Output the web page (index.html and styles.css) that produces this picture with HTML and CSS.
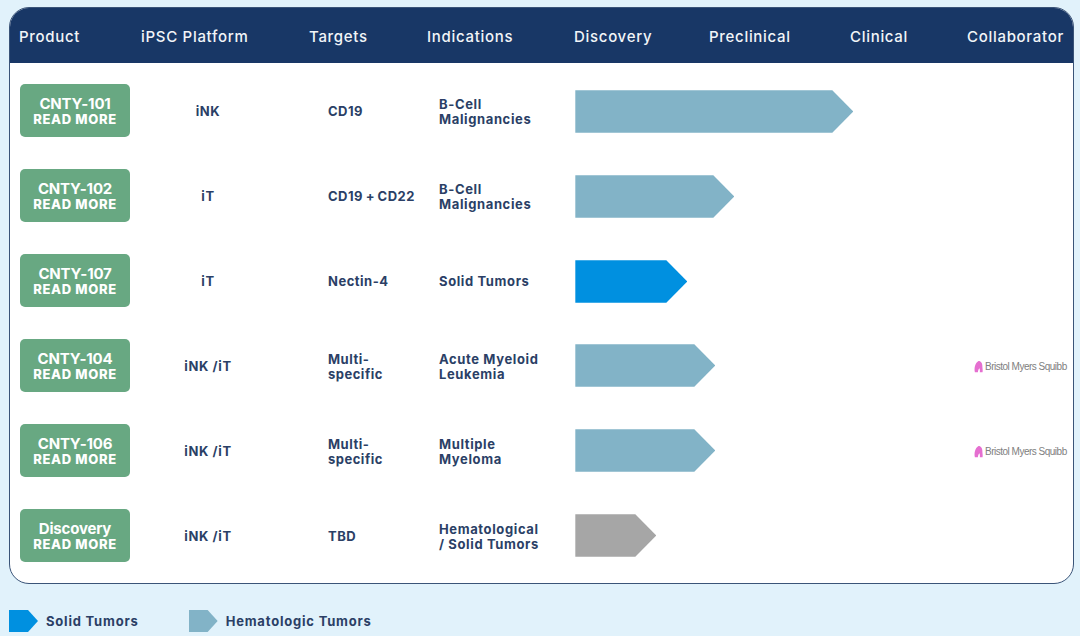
FILE: index.html
```html
<!DOCTYPE html>
<html lang="en">
<head>
<meta charset="utf-8">
<title>Pipeline</title>
<link rel="stylesheet" href="styles.css">
</head>
<body>
<main class="page">
  <section class="card">
    <header class="head">
      <span>Product</span><span>iPSC Platform</span><span>Targets</span><span>Indications</span><span>Discovery</span><span>Preclinical</span><span>Clinical</span><span>Collaborator</span>
    </header>
    <div class="rows">
      <div class="row">
        <a class="btn"><b>CNTY-101</b><i>READ MORE</i></a>
        <span class="plat">iNK</span><span class="tgt">CD19</span><span class="ind">B-Cell<br>Malignancies</span>
        <div class="bar"><div class="arrow heme" style="width:278px"></div></div>
        <div class="collab"></div>
      </div>
      <div class="row">
        <a class="btn"><b>CNTY-102</b><i>READ MORE</i></a>
        <span class="plat">iT</span><span class="tgt">CD19 + CD22</span><span class="ind">B-Cell<br>Malignancies</span>
        <div class="bar"><div class="arrow heme" style="width:159px"></div></div>
        <div class="collab"></div>
      </div>
      <div class="row">
        <a class="btn"><b>CNTY-107</b><i>READ MORE</i></a>
        <span class="plat">iT</span><span class="tgt">Nectin-4</span><span class="ind">Solid Tumors</span>
        <div class="bar"><div class="arrow solid" style="width:112px"></div></div>
        <div class="collab"></div>
      </div>
      <div class="row">
        <a class="btn"><b>CNTY-104</b><i>READ MORE</i></a>
        <span class="plat">iNK /iT</span><span class="tgt">Multi-<br>specific</span><span class="ind">Acute Myeloid<br>Leukemia</span>
        <div class="bar up"><div class="arrow heme" style="width:140px"></div></div>
        <div class="collab"><svg class="flame" viewBox="0 0 10 14"><path d="M1 13.500C0 9 1 3 5 .8c3 0 4.500 3 4.300 6 0 2 .7 4.700.2 6.700H6.500C6.700 11.500 6.500 10 6 9 5 10 4.500 11.500 4.300 13.500Z"/></svg><span class="bms">Bristol Myers Squibb</span></div>
      </div>
      <div class="row">
        <a class="btn"><b>CNTY-106</b><i>READ MORE</i></a>
        <span class="plat">iNK /iT</span><span class="tgt">Multi-<br>specific</span><span class="ind">Multiple<br>Myeloma</span>
        <div class="bar up"><div class="arrow heme" style="width:140px"></div></div>
        <div class="collab"><svg class="flame" viewBox="0 0 10 14"><path d="M1 13.500C0 9 1 3 5 .8c3 0 4.500 3 4.300 6 0 2 .7 4.700.2 6.700H6.500C6.700 11.500 6.500 10 6 9 5 10 4.500 11.500 4.300 13.500Z"/></svg><span class="bms">Bristol Myers Squibb</span></div>
      </div>
      <div class="row">
        <a class="btn"><b>Discovery</b><i>READ MORE</i></a>
        <span class="plat">iNK /iT</span><span class="tgt">TBD</span><span class="ind">Hematological<br>/ Solid Tumors</span>
        <div class="bar up"><div class="arrow grey" style="width:81px"></div></div>
        <div class="collab"></div>
      </div>
    </div>
  </section>
  <footer class="legend">
    <div class="key"><div class="mark solid"></div><span>Solid Tumors</span></div>
    <div class="key"><div class="mark heme"></div><span>Hematologic Tumors</span></div>
  </footer>
</main>
</body>
</html>
```
FILE: styles.css
```css
* { box-sizing: border-box; }
html, body { margin: 0; height: 100%; }
body { background: #e1f2fb; font-family: Inter, "Open Sans", sans-serif; overflow: hidden; }
.page { padding: 7px 6px 0 9px; }
.card { height: 577px; background: #fff; border: 1px solid #3a5478; border-radius: 20px; overflow: hidden; }
.head { height: 56px; margin: -1px -1px 0; background: #183766; color: #f2f5f8; display: grid; grid-template-columns: 122px 168px 118px 147px 135px 141px 117px 1fr; padding: 3px 0 0 10px; align-items: center; font-size: 15px; font-weight: 500; letter-spacing: 0.7px; }
.rows { padding-top: 6px; }
.row { height: 85px; display: grid; grid-template-columns: 110px 156px 153px 136px 398px 1fr; padding-left: 10px; align-items: center; color: #2b3f66; font-size: 13px; font-weight: 700; line-height: 15px; letter-spacing: 0.62px; }
.btn { height: 53.5px; margin-bottom: 2px; background: #68a882; border-radius: 5px; color: #fff; display: flex; flex-direction: column; align-items: center; justify-content: center; }
.btn b { font-size: 15px; font-weight: 700; line-height: 17px; letter-spacing: -0.2px; }
.btn i { font-style: normal; font-size: 13px; font-weight: 800; line-height: 15px; letter-spacing: 0.65px; }
.plat { text-align: center; }
.tgt { padding-left: 42px; letter-spacing: 0.5px; word-spacing: -1px; }
.bar.up { margin-bottom: 2px; }
.arrow { height: 42.5px; margin-left: 0.3px; clip-path: polygon(0 0, calc(100% - 21px) 0, 100% 50%, calc(100% - 21px) 100%, 0 100%); }
.heme { background: #82b3c7; }
.solid { background: #0090e0; }
.grey { background: #a6a6a6; }
.collab { display: flex; align-items: center; height: 16px; margin-left: 1px; }
.flame { width: 9px; height: 13px; fill: #e56fd0; flex: none; margin-right: 2px; }
.bms { font-family: "Liberation Sans", sans-serif; font-size: 10px; font-weight: 400; color: #808080; letter-spacing: -0.5px; white-space: nowrap; line-height: 12px; }
.legend { display: flex; padding-top: 26px; gap: 50px; color: #2b3f66; font-size: 13px; font-weight: 700; letter-spacing: 0.8px; }
.key { display: flex; align-items: center; gap: 8px; }
.mark { width: 29px; height: 22px; clip-path: polygon(0 0, 19px 0, 100% 50%, 19px 100%, 0 100%); }
```
